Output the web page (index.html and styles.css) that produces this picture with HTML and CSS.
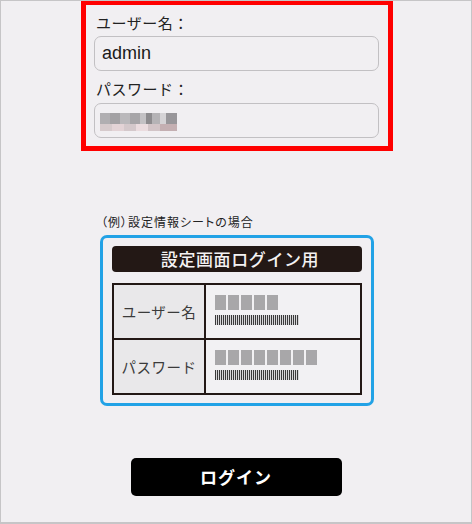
FILE: index.html
```html
<!DOCTYPE html>
<html lang="ja">
<head>
<meta charset="utf-8">
<link rel="stylesheet" href="styles.css">
</head>
<body>
<div class="frame">
  <div class="login-box">
    <div class="label">ユーザー名：</div>
    <div class="input"><span class="value">admin</span></div>
    <div class="label label-pass">パスワード：</div>
    <div class="input input-pass"><span class="mosaic"><span class="m-top"></span><span class="m-bot"></span></span></div>
  </div>

  <div class="example-caption">（例）設定情報シートの場合</div>

  <div class="sheet">
    <div class="sheet-title">設定画面ログイン用</div>
    <div class="sheet-table">
      <div class="cell-head">ユーザー名</div>
      <div class="cell-val">
        <div class="squares"><i></i><i></i><i></i><i></i><i></i></div>
        <div class="bars"></div>
      </div>
      <div class="cell-head">パスワード</div>
      <div class="cell-val">
        <div class="squares"><i></i><i></i><i></i><i></i><i></i><i></i><i></i><i></i></div>
        <div class="bars"></div>
      </div>
    </div>
  </div>

  <div class="btn-row"><div class="login-btn">ログイン</div></div>
</div>
</body>
</html>
```

FILE: styles.css
```css
* { box-sizing: border-box; }
html, body { margin: 0; padding: 0; }
body { background: #f1eff2; font-family: "Noto Sans CJK JP", "Noto Sans", sans-serif; }

.frame {
  width: 472px;
  height: 524px;
  border: 1px solid #c6c5c7;
  border-bottom-width: 2px;
  background: #f1eff2;
  overflow: hidden;
}

.login-box {
  margin: -1px 0 0 80px;
  width: 312px;
  border: 5px solid #ff0000;
  padding: 8px 9px 8px 8px;
  display: flex;
  flex-direction: column;
}

.label {
  height: 20px;
  line-height: 20px;
  font-size: 15px;
  color: #222;
  padding-left: 2px;
  letter-spacing: 0.5px;
}
.label-pass { margin-top: 8px; }

.input {
  margin-top: 3px;
  height: 35px;
  border: 1px solid #c2c0c3;
  border-radius: 7px;
  background: #f1eff2;
  display: flex;
  align-items: center;
  padding-left: 7px;
}
.input-pass { margin-top: 4px; padding-left: 5px; }

.value {
  font-family: "Liberation Sans", Arial, sans-serif;
  font-size: 18px;
  color: #1a1a1a;
}

.mosaic {
  display: flex;
  flex-direction: column;
  width: 77px;
  height: 18px;
  margin-top: 2px;
}
.m-top {
  height: 11px;
  background:
    linear-gradient(90deg,
      #b0aeb1 0 10px, #a3a1a4 10px 20px, #bab8bb 20px 30px, #a7a5a8 30px 40px,
      #c3c1c4 40px 46px, #8d8b8e 46px 52px, #b5b3b6 52px 60px, #d5d3d6 60px 66px, #98969a 66px 77px);
}
.m-bot {
  height: 7px;
  background:
    linear-gradient(90deg,
      #d6cacc 0 12px, #e3d3d6 12px 24px, #d4c8cb 24px 36px, #ebdcdf 36px 48px,
      #d2c4c7 48px 60px, #c4afb2 60px 77px);
}

.example-caption {
  margin: 62px 0 0 100px;
  font-size: 12px;
  line-height: 17px;
  color: #222;
  font-feature-settings: "palt";
  letter-spacing: 1px;
}

.sheet {
  margin: 5px 0 0 99px;
  width: 274px;
  border: 3px solid #22a2e6;
  border-radius: 7px;
  padding: 8px 9px 8px 9px;
}

.sheet-title {
  height: 26px;
  background: #231815;
  border-radius: 4px;
  color: #f4f2f2;
  font-size: 17px;
  font-weight: 500;
  line-height: 26px;
  text-align: center;
  letter-spacing: 0.6px;
  padding-left: 6px;
}

.sheet-table {
  margin-top: 11px;
  display: grid;
  grid-template-columns: 90px 1fr;
  border: 2px solid #231815;
  background: #231815;
  gap: 2px;
}

.cell-head {
  height: 53px;
  background: #e9e8ea;
  display: flex;
  align-items: center;
  justify-content: center;
  font-size: 14.5px;
  color: #3b3b3b;
  letter-spacing: 0.5px;
}

.cell-val {
  height: 53px;
  background: #f2f1f3;
  padding: 10px 0 0 9px;
}

.squares { display: flex; gap: 2px; height: 15px; }
.squares i {
  display: block;
  width: 11px;
  height: 15px;
  background: #a8a7a9;
}

.bars {
  margin-top: 5px;
  width: 84px;
  height: 10px;
  background: repeating-linear-gradient(90deg, #3a3a3a 0 1px, #d8d7d9 1px 2px);
}

.btn-row {
  margin-top: 52px;
  display: flex;
  justify-content: center;
}

.login-btn {
  width: 211px;
  height: 38px;
  background: #000;
  border-radius: 5px;
  color: #fff;
  font-size: 17px;
  font-weight: bold;
  line-height: 38px;
  text-align: center;
  letter-spacing: 1px;
}
```
